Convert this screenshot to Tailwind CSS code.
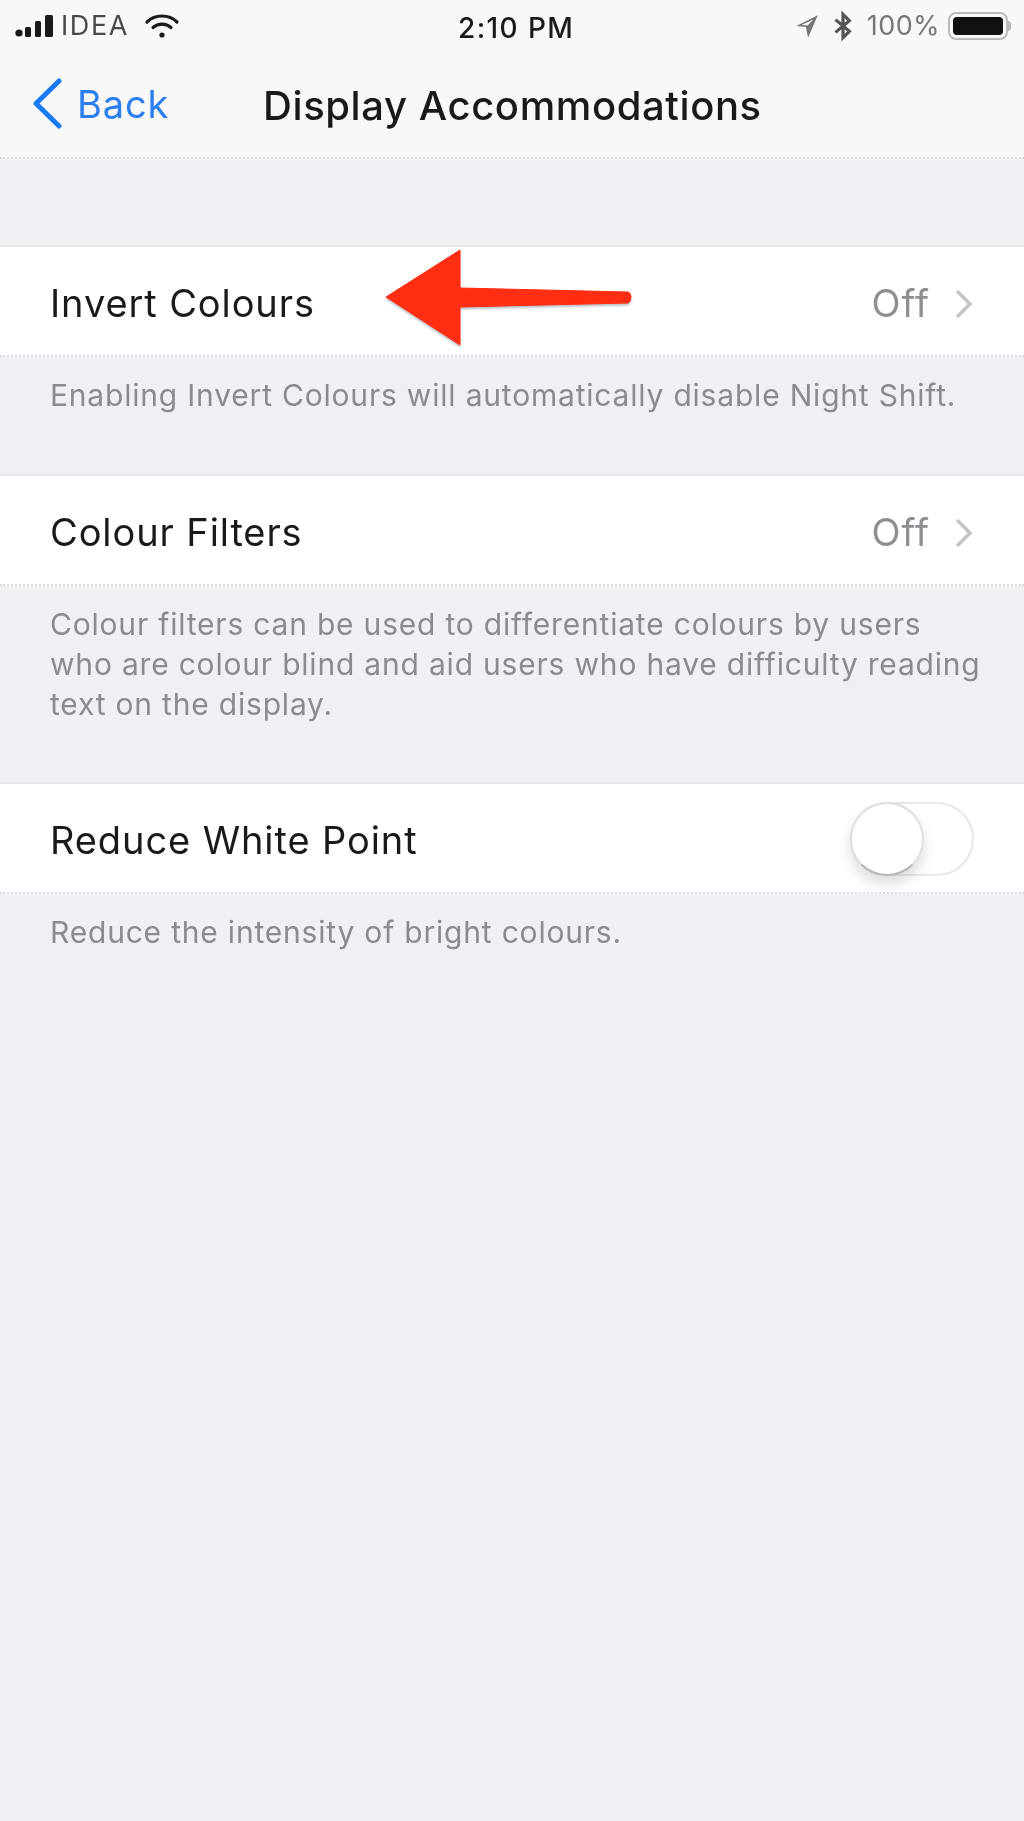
<!DOCTYPE html>
<html lang="en">
<head>
  <meta charset="UTF-8">
  <meta name="viewport" content="width=device-width, initial-scale=1.0">
  <title>Display Accommodations</title>
  <script src="https://cdn.jsdelivr.net/npm/@tailwindcss/browser@4"></script>
</head>
<body class="bg-[#efeff4] text-[#1a1a1a] font-['Inter',sans-serif] w-[1024px] h-[1821px] overflow-hidden">
<div class="blur-[0.6px] h-full relative">

  <!-- status bar + nav -->
  <header class="h-[159px] bg-[#f8f8f9] border-b-2 border-dotted border-[#dcdce0]">
    <div class="h-[52px] relative flex items-center justify-between pl-[15px] pr-[13px]">
      <div class="flex items-center gap-[6px]">
        <svg width="42" height="26" viewBox="0 0 42 26" fill="#1a1a1a">
          <circle cx="4" cy="20" r="3.6"/>
          <rect x="10" y="14" width="6" height="10" rx="1.5"/>
          <rect x="20" y="8" width="6" height="16" rx="1.5"/>
          <rect x="30" y="2" width="8" height="22" rx="1.5"/>
        </svg>
        <span class="text-[#4a4a4a] text-[27px] tracking-[1.6px] -ml-[2px]">IDEA</span>
        <svg class="ml-[9px]" width="36" height="26" viewBox="0 0 36 26" fill="none" stroke="#1a1a1a" stroke-width="3.2" stroke-linecap="round">
          <path d="M3 9 C11 1 25 1 33 9"/>
          <path d="M9 14.5 C14 10 22 10 27 14.5"/>
          <circle cx="18" cy="22" r="2.6" fill="#1a1a1a" stroke="none"/>
        </svg>
      </div>
      <span class="absolute left-[458px] top-[7px] font-medium text-[28px] tracking-[1.4px]">2:10 PM</span>
      <div class="flex items-center gap-[10px]">
        <svg width="26" height="28" viewBox="0 0 24 26" fill="#777"><path d="M22 3 L2 13 L11 14 L13 24 Z M18 7 L12.5 12.5 L7 12 Z" fill-rule="evenodd"/></svg>
        <svg class="ml-[2px]" width="22" height="32" viewBox="0 0 20 30" fill="none" stroke="#555" stroke-width="3"><path d="M3 9 L16 20 L10 26 L10 4 L16 10 L3 21"/></svg>
        <span class="text-[27px] tracking-[0.4px] ml-[3px] text-[#777]">100%</span>
        <div class="-ml-[2px] flex items-center">
          <div class="w-[60px] h-[28px] rounded-[8px] border-2 border-[#bbb] p-[3px]">
            <div class="w-full h-full rounded-[4px] bg-[#111]"></div>
          </div>
          <div class="w-[3px] h-[10px] bg-[#bbb] rounded-r-sm"></div>
        </div>
      </div>
    </div>
    <div class="h-[105px] relative flex items-center">
      <a class="flex items-center text-[#2b7ff0] text-[38px] tracking-[0.9px] pl-[32px] -mt-[1px]">
        <svg width="30" height="52" viewBox="0 0 30 52" fill="none" stroke="#1a7af5" stroke-width="5" stroke-linecap="round" stroke-linejoin="round"><path d="M27 3 L4 25.5 L27 48"/></svg>
        <span class="ml-[15px]">Back</span>
      </a>
      <h1 class="absolute left-[263px] top-[24px] text-[40px] tracking-[0.6px] font-medium whitespace-nowrap">Display Accommodations</h1>
    </div>
  </header>

  <main>
    <section class="mt-[86px]">
      <div class="h-[112px] pt-[5px] bg-white border-t-2 border-b-2 border-t-[#e6e6ea] border-b-[#dcdce0] [border-bottom-style:dotted] flex items-center justify-between px-[50px]">
        <span class="text-[38px] tracking-[0.9px]">Invert Colours</span>
        <div class="flex items-center gap-[24px] text-[38px] tracking-[0.9px] text-[#8e8e93]">
          <span>Off</span>
          <svg width="20" height="32" viewBox="0 0 20 32" fill="none" stroke="#c4c4c8" stroke-width="3.5"><path d="M3 3 L16 16 L3 29"/></svg>
        </div>
      </div>
      <p class="px-[50px] pt-[18px] text-[30px] tracking-[0.8px] leading-[40px] text-[#8a8a8f]">Enabling Invert Colours will automatically disable Night Shift.</p>
    </section>

    <section class="mt-[59px]">
      <div class="h-[112px] pt-[5px] bg-white border-t-2 border-b-2 border-t-[#e6e6ea] border-b-[#dcdce0] [border-bottom-style:dotted] flex items-center justify-between px-[50px]">
        <span class="text-[38px] tracking-[0.9px]">Colour Filters</span>
        <div class="flex items-center gap-[24px] text-[38px] tracking-[0.9px] text-[#8e8e93]">
          <span>Off</span>
          <svg width="20" height="32" viewBox="0 0 20 32" fill="none" stroke="#c4c4c8" stroke-width="3.5"><path d="M3 3 L16 16 L3 29"/></svg>
        </div>
      </div>
      <p class="pl-[50px] pt-[18px] text-[30px] tracking-[0.8px] leading-[40px] text-[#8a8a8f] whitespace-nowrap">Colour filters can be used to differentiate colours by users<br>who are colour blind and aid users who have difficulty reading<br>text on the display.</p>
    </section>

    <section class="mt-[58px]">
      <div class="h-[112px] pt-[5px] bg-white border-t-2 border-b-2 border-t-[#e6e6ea] border-b-[#dcdce0] [border-bottom-style:dotted] flex items-center justify-between px-[50px]">
        <span class="text-[38px] tracking-[0.9px]">Reduce White Point</span>
        <div class="relative w-[124px] h-[74px] -mt-[3px] rounded-full border-2 border-[#e8e8ea] bg-white">
          <div class="absolute -left-[2px] -top-[2px] w-[74px] h-[74px] rounded-full bg-white border-2 border-[#e0e0e3] border-b-[#b8b8bc] shadow-[0_8px_14px_rgba(0,0,0,0.14)]"></div>
        </div>
      </div>
      <p class="px-[50px] pt-[18px] text-[30px] tracking-[0.8px] leading-[40px] text-[#8a8a8f]">Reduce the intensity of bright colours.</p>
    </section>
  </main>

  <!-- annotation arrow laid over the first row -->
  <svg class="absolute left-[380px] top-[245px]" width="260" height="110" viewBox="0 0 260 110">
    <path d="M6 52 L80 5 L80 43 L248 47 Q251 48 251 52 Q251 57 248 58 L80 62 L80 100 Z" fill="#ff2d12" stroke="#ff2d12" stroke-width="1" style="filter:drop-shadow(0 2px 1px rgba(60,80,100,.35))"/>
  </svg>
</div>
</body>
</html>
